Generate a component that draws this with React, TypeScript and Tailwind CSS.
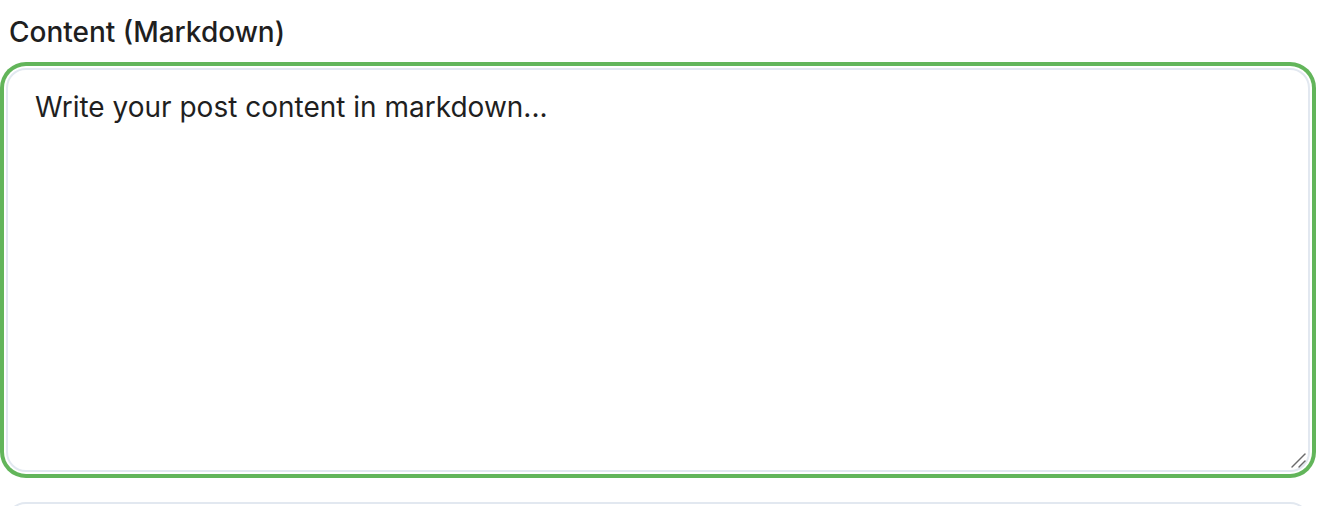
import React from 'react';

const App = () => {
  return (
    <div className="min-h-screen bg-white pl-[6px] pr-[26px] pt-[14px]" style={{ fontFamily: 'Inter, "Noto Sans", sans-serif' }}>
      <label className="block pl-[3px] text-[28px] font-medium leading-[36px] text-[#1f1f1f]">
        Content (Markdown)
      </label>
      <div className="relative mt-[18px]">
        <textarea
          className="block h-[404px] w-full resize-none rounded-[20px] border-2 border-[#e2e8f0] bg-white px-[27px] py-[16px] text-[28px] leading-[42px] text-[#1f1f1f] placeholder:text-[#1f1f1f] outline-none ring-4 ring-[#62b55a] ring-offset-2"
          placeholder="Write your post content in markdown..."
        />
        {/* resize grip */}
        <svg className="pointer-events-none absolute bottom-[4px] right-[4px]" width="16" height="16" viewBox="0 0 16 16">
          <path d="M2 15 L15 2" stroke="#6b6b6b" strokeWidth="1.4" strokeLinecap="round" />
          <path d="M9 15 L15 9" stroke="#6b6b6b" strokeWidth="1.4" strokeLinecap="round" />
        </svg>
      </div>
      <div className="mt-[30px] h-[60px] rounded-[20px] border-2 border-[#e2e8f0]" />
    </div>
  );
};

export default App;
